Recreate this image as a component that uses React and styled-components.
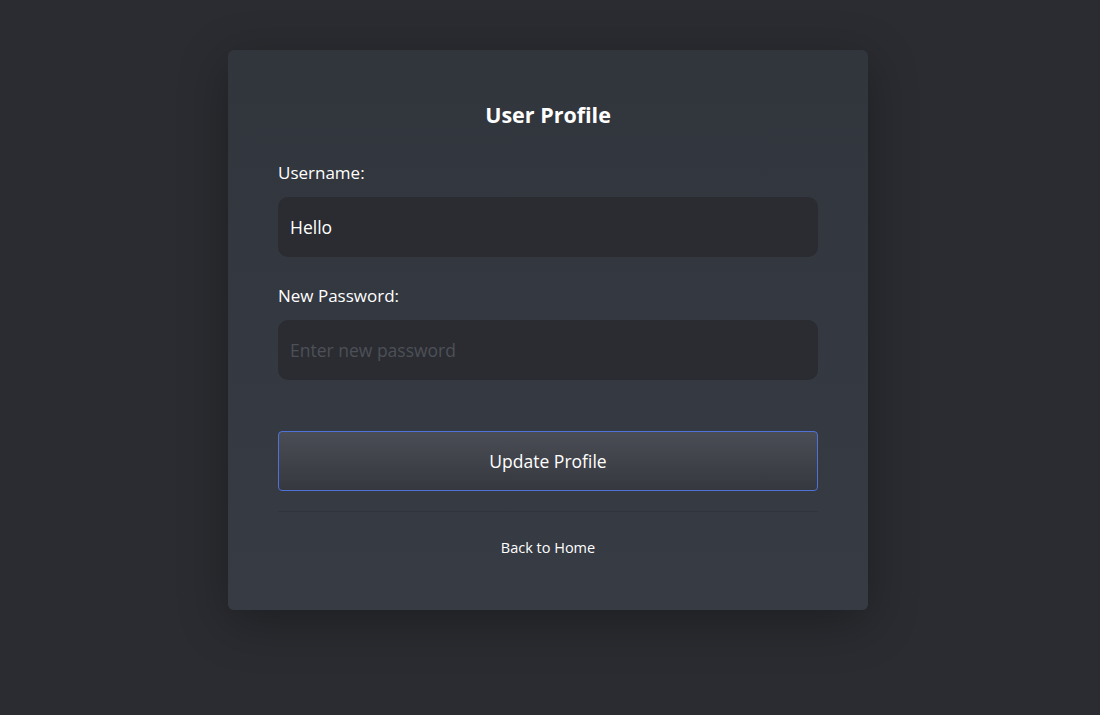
import React from 'react';
import styled, { createGlobalStyle } from 'styled-components';

const GlobalStyle = createGlobalStyle`
  html, body {
    margin: 0;
    padding: 0;
    background-color: #2a2c31;
    font-family: "Open Sans", "Noto Sans", sans-serif;
    color: #ffffff;
  }
`;

const Page = styled.div`
  min-height: 715px;
  display: flex;
  justify-content: center;
  align-items: flex-start;
  padding: 50px 4px 0 0;
  box-sizing: border-box;
`;

const Card = styled.div`
  width: 640px;
  box-sizing: border-box;
  padding: 50px 50px 52px;
  border-radius: 6px;
  background: linear-gradient(180deg, #31353c 0%, #373b44 100%);
  box-shadow: 0 12px 50px rgba(0, 0, 0, 0.3);
  display: flex;
  flex-direction: column;
`;

const Title = styled.h2`
  margin: 0 0 31px;
  font-size: 21.5px;
  line-height: 30px;
  font-weight: 700;
  text-align: center;
`;

const Field = styled.div`
  display: flex;
  flex-direction: column;
  margin-bottom: ${(p) => p.$gap || 27}px;
`;

const Label = styled.label`
  font-size: 17px;
  line-height: 24px;
  margin-bottom: 12px;
`;

const Input = styled.input`
  height: 60px;
  box-sizing: border-box;
  padding: 0 12px;
  border: none;
  border-radius: 10px;
  background-color: #2a2c31;
  color: #ffffff;
  font-family: inherit;
  font-size: 17.5px;
  outline: none;

  &::placeholder {
    color: #4d5058;
  }
`;

const Button = styled.button`
  height: 60px;
  border: 1px solid #4f72d9;
  border-radius: 4px;
  background: linear-gradient(180deg, #4a4d55 0%, #35383e 100%);
  color: #ffffff;
  font-family: inherit;
  font-size: 17.5px;
  cursor: pointer;
`;

const Divider = styled.hr`
  margin: 20px 0 26px;
  border: none;
  height: 1px;
  background-color: #31343b;
`;

const HomeLink = styled.a`
  text-align: center;
  font-size: 14.5px;
  line-height: 20px;
  color: #ffffff;
  text-decoration: none;
`;

const App = () => {
  return (
    <>
      <GlobalStyle />
      <Page>
        <Card>
          <Title>User Profile</Title>
          <Field>
            <Label>Username:</Label>
            <Input defaultValue="Hello" />
          </Field>
          <Field $gap={51}>
            <Label>New Password:</Label>
            <Input type="password" placeholder="Enter new password" />
          </Field>
          <Button>Update Profile</Button>
          <Divider />
          <HomeLink href="#">Back to Home</HomeLink>
        </Card>
      </Page>
    </>
  );
};

export default App;
